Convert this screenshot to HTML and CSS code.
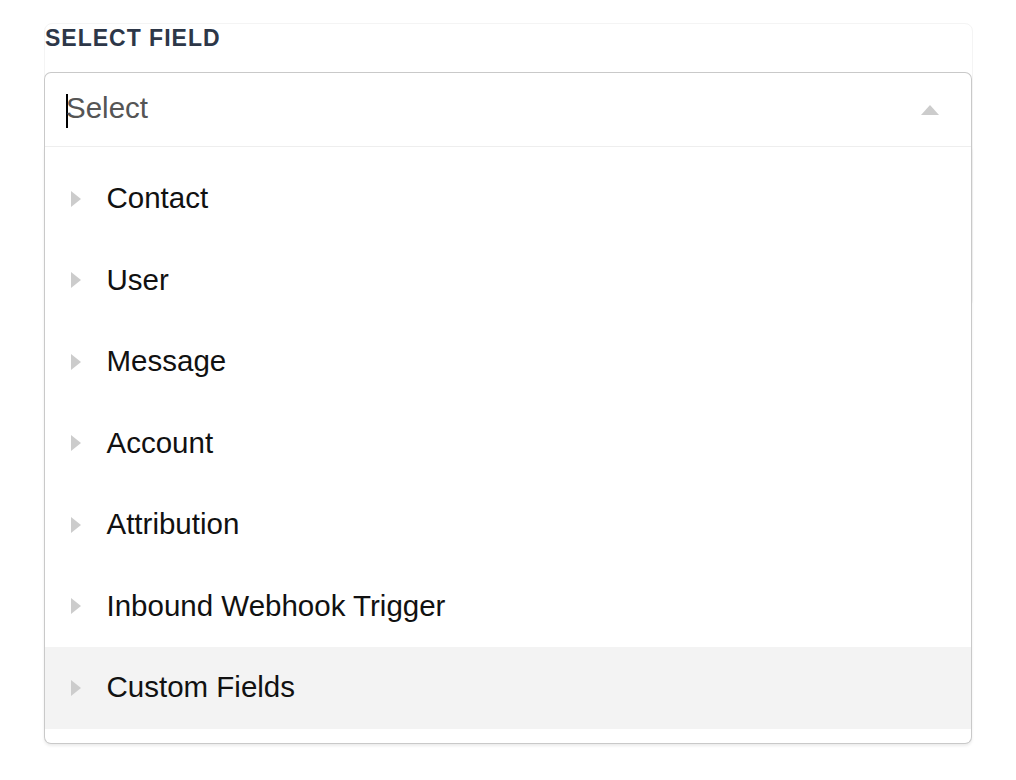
FILE: index.html
```html
<!DOCTYPE html>
<html lang="en">
<head>
<meta charset="utf-8">
<title>Select Field</title>
<link rel="stylesheet" href="styles.css">
</head>
<body>
  <div class="page">
    <div class="panel">
      <div class="label">SELECT FIELD</div>
      <div class="select">
        <div class="select-input">
          <span class="cursor"></span><span class="placeholder">Select</span>
          <span class="caret-up"></span>
        </div>
        <ul class="menu">
          <li class="row"><span class="caret-right"></span><span class="row-text">Contact</span></li>
          <li class="row"><span class="caret-right"></span><span class="row-text">User</span></li>
          <li class="row"><span class="caret-right"></span><span class="row-text">Message</span></li>
          <li class="row"><span class="caret-right"></span><span class="row-text">Account</span></li>
          <li class="row"><span class="caret-right"></span><span class="row-text">Attribution</span></li>
          <li class="row"><span class="caret-right"></span><span class="row-text">Inbound Webhook Trigger</span></li>
          <li class="row row-hover"><span class="caret-right"></span><span class="row-text">Custom Fields</span></li>
        </ul>
      </div>
      <div class="panel-rest"></div>
    </div>
  </div>
</body>
</html>
```

FILE: styles.css
```css
* { box-sizing: border-box; }

html, body {
  margin: 0;
  padding: 0;
  background: #ffffff;
  font-family: "Liberation Sans", Arial, sans-serif;
}

.page {
  min-height: 780px;
  padding-top: 23px;
}

.panel {
  margin-left: 44px;
  width: 929px;
  border: 1px solid #f4f4f4;
  border-radius: 8px;
  padding-top: 1px;
}

.label {
  font-size: 23px;
  line-height: 26px;
  font-weight: 700;
  letter-spacing: 1px;
  color: #2d3748;
}

.select {
  position: relative;
  z-index: 1;
  margin: 21px 0 0 -1px;
  width: 928px;
  border: 1px solid #c9c9c9;
  border-bottom: none;
  border-radius: 7px 7px 0 0;
  background: #ffffff;
}

.select-input {
  display: flex;
  align-items: center;
  height: 74px;
  padding-left: 21px;
  padding-bottom: 3px;
  border-bottom: 1px solid #eeeeee;
}

.cursor {
  display: inline-block;
  width: 2px;
  height: 34px;
  margin-top: 6px;
  margin-right: -2px;
  background: #000000;
}

.placeholder {
  font-size: 29.5px;
  line-height: 34px;
  color: #555555;
}

.caret-up {
  margin-left: auto;
  margin-right: 32px;
  margin-top: 3px;
  width: 0;
  height: 0;
  border-left: 9px solid transparent;
  border-right: 9px solid transparent;
  border-bottom: 10px solid #cccccc;
}

.menu {
  position: absolute;
  top: 100%;
  left: -1px;
  right: -1px;
  margin: 0;
  padding: 11px 0 14px;
  list-style: none;
  background: #ffffff;
  border: 1px solid #c9c9c9;
  border-top: none;
  border-radius: 0 0 7px 7px;
  box-shadow: 0 2px 3px rgba(0, 0, 0, 0.08);
}

.row {
  display: flex;
  align-items: center;
  height: 81.5px;
  padding-left: 26px;
}

.row-hover {
  background: #f3f3f3;
}

.caret-right {
  width: 0;
  height: 0;
  border-top: 8.5px solid transparent;
  border-bottom: 8.5px solid transparent;
  border-left: 10px solid #cccccc;
}

.row-text {
  margin-left: 25.5px;
  margin-bottom: 1px;
  font-size: 29.5px;
  line-height: 34px;
  color: #111111;
}

.panel-rest {
  height: 160px;
}
```
